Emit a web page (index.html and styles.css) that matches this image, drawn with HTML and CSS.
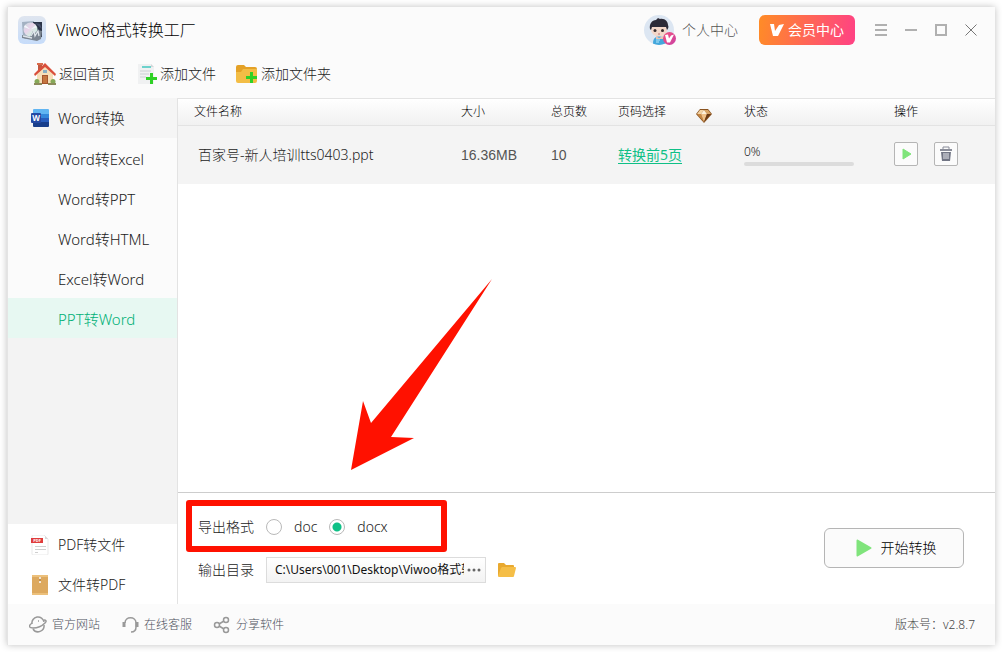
FILE: index.html
```html
<!DOCTYPE html>
<html lang="zh-CN">
<head>
  <meta charset="UTF-8">
  <meta name="viewport" content="width=device-width, initial-scale=1.0">
  <title>Viwoo格式转换工厂</title>
  <link rel="stylesheet" href="styles.css">
</head>
<body>
  <div class="window">
    <header class="title-bar">
      <svg class="logo" viewBox="0 0 28 28">
        <defs>
          <linearGradient id="logo-bg" x1="0" y1="0" x2="0" y2="1">
            <stop offset="0" stop-color="#dfe5ef"/><stop offset="1" stop-color="#c6dcfa"/>
          </linearGradient>
          <linearGradient id="disc" x1="0" y1="0" x2="1" y2="1">
            <stop offset="0" stop-color="#c4dcde"/><stop offset=".4" stop-color="#ead3ea"/><stop offset=".7" stop-color="#d5ede2"/><stop offset="1" stop-color="#b9bcd8"/>
          </linearGradient>
        </defs>
        <rect width="28" height="28" rx="6" fill="url(#logo-bg)"/>
        <path d="M4 6l12-1v16l-9 2-2-2z" fill="#a3b1c2"/>
        <path d="M15 6h9v15l-8 1z" fill="#2b3448"/>
        <path d="M17 7l5 1 2 5z" fill="#47516b"/>
        <circle cx="12.500" cy="13.500" r="7" fill="url(#disc)"/>
        <path d="M12.500 13.500L6 11l1-2zM12.500 13.500l5-4 1 2z" fill="#f3f6fb"/>
        <path d="M4 19l8 2 3-6 2 2 3-3 4 1-1 8-4 2-15-3z" fill="#7b8591"/>
        <path d="M5 20l9 2M13 20l3-5 1 5 3-5 1 5" fill="none" stroke="#dfe5ea" stroke-width="1.300"/>
      </svg>
      <h1>Viwoo格式转换工厂</h1>
      <button class="profile">
        <svg class="avatar" viewBox="0 0 32 30">
          <defs>
            <clipPath id="avatar-clip"><circle cx="15" cy="15" r="15"/></clipPath>
            <linearGradient id="badge" x1="0" y1="0" x2="1" y2="1">
              <stop offset="0" stop-color="#f5547c"/><stop offset="1" stop-color="#c940a5"/>
            </linearGradient>
          </defs>
          <g clip-path="url(#avatar-clip)">
            <rect width="30" height="30" fill="#dce6f2"/>
            <path d="M9 30q-1-8 6-9 8 1 7 9z" fill="#43a7dc"/>
            <path d="M12 21l3 2 4-2v3h-7z" fill="#e8c2b4"/>
            <path d="M12 25h4M12 27h3" stroke="#b8e8fb"/>
          </g>
          <ellipse cx="15" cy="15" rx="8" ry="6.500" fill="#f3d7c9"/>
          <path d="M6 14c-1-5 2-9 6-9l2-2 2 1c5-1 8 3 8 6 1 2 0 4-1 5l-1-3H8l-1 3z" fill="#2c2b38"/>
          <circle cx="11" cy="15.500" r="1.500" fill="#372c2d"/><circle cx="18.500" cy="15.500" r="1.500" fill="#372c2d"/>
          <path d="M14 19h2" stroke="#bc7370"/>
          <circle cx="25.500" cy="23.500" r="6.500" fill="url(#badge)"/>
          <path d="M21 20l3-.5 1 4 2-3 3-1-4 8h-3z" fill="#fff"/>
        </svg>
        个人中心
      </button>
      <button class="vip">
        <svg viewBox="0 0 14 14"><path d="M0 1h4l1 7 4-6 5-1-6 12H3z" fill="#fff"/></svg>
        会员中心
      </button>
      <div class="window-controls">
        <button aria-label="菜单"><svg viewBox="0 0 12 12"><path d="M0 1h12M0 6h12M0 11h12"/></svg></button>
        <button aria-label="最小化"><svg viewBox="0 0 12 12"><path d="M0 6h12"/></svg></button>
        <button aria-label="最大化"><svg viewBox="0 0 12 12"><rect x="1" y="1" width="10" height="10"/></svg></button>
        <button aria-label="关闭"><svg viewBox="0 0 12 12"><path d="M.5.5l11 11M11.500.5l-11 11" class="cross"/></svg></button>
      </div>
    </header>

    <nav class="toolbar">
      <button>
        <svg viewBox="0 0 22 22">
          <path d="M4 1h4v8H4z" fill="#c0573f"/><path d="M3 0h6v2H3z" fill="#d96b4c"/>
          <path d="M3 11l8-8 8 8v10H3z" fill="#f6deb8"/>
          <path d="M0 11L11 0l11 11-1 2-10-9-10 9z" fill="#d94f3b"/>
          <path d="M8 12h6v9H8z" fill="#a5562e"/><path d="M9 13h4v7H9z" fill="#c5753f"/>
          <rect x="9" y="7" width="4" height="3" fill="#8aaec2"/>
          <g fill="#86a959"><circle cx="3" cy="18.500" r="2.500"/><circle cx="19" cy="18.500" r="2.500"/></g>
          <path d="M0 20h8v2H0zm14 0h8v2h-8z" fill="#8c8c5c"/>
        </svg>
        返回首页
      </button>
      <button>
        <svg viewBox="0 0 22 22">
          <path d="M3 1h13l3 3v17H3z" fill="#f0f1f2"/><path d="M16 1v3h3z" fill="#d4d7d9"/>
          <path d="M7 4h9" stroke="#42c7bf" stroke-width="1.500"/>
          <path d="M5 8h11M5 11h9M5 14h6" stroke="#cbd0d4"/>
          <path d="M15 10h3v4h4v3h-4v4h-3v-4h-4v-3h4z" fill="#2fd126"/>
        </svg>
        添加文件
      </button>
      <button>
        <svg viewBox="0 0 22 22">
          <path d="M0 4q0-2 2-2h6l2 2h9q2 0 2 2v12H0z" fill="#e4a126"/>
          <path d="M7 6h14v12q0 2-2 2H2q-2 0-2-2V9h5z" fill="#f3bd45"/>
          <path d="M14 9h3v4h4v3h-4v4h-3v-4h-4v-3h4z" fill="#2fd126"/>
        </svg>
        添加文件夹
      </button>
    </nav>

    <div class="content">
      <aside class="sidebar">
        <a href="#" class="group open">
          <svg viewBox="0 0 18 18">
            <path d="M2 1q0-1 1-1h14q1 0 1 1v4H2z" fill="#61b5f2"/><path d="M2 5h16v4H2z" fill="#3487db"/>
            <path d="M2 9h16v4H2z" fill="#285dbd"/><path d="M2 13h16v4q0 1-1 1H3q-1 0-1-1z" fill="#183e8b"/>
            <rect y="4" width="10" height="10" rx="1" fill="#2449a3"/>
            <text x="5" y="12" text-anchor="middle" class="word-mark">W</text>
          </svg>
          Word转换
        </a>
        <a href="#" class="item">Word转Excel</a>
        <a href="#" class="item">Word转PPT</a>
        <a href="#" class="item">Word转HTML</a>
        <a href="#" class="item">Excel转Word</a>
        <a href="#" class="item active">PPT转Word</a>
        <div class="sidebar-fill"></div>
        <a href="#" class="group">
          <svg viewBox="0 0 18 20">
            <path d="M2 0h11l4 4v15q0 1-1 1H2q-1 0-1-1V1q0-1 1-1z" fill="#fff" stroke="#e9e9e9"/>
            <path d="M14 1l3 3h-3z" fill="#d8d8d8"/>
            <rect y="3" width="12" height="5" fill="#df3c3c"/>
            <text x="6" y="7" text-anchor="middle" class="pdf-mark">PDF</text>
            <path d="M4 11.500h11M4 14.500h11M4 17.500h3" stroke="#cfcfcf"/>
          </svg>
          PDF转文件
        </a>
        <a href="#" class="group">
          <svg viewBox="0 0 18 20">
            <rect x="1" width="16" height="20" rx="1" fill="#dda95f"/><path d="M1 0h16v2H1zm0 18h16v2H1z" fill="#ecc07b"/>
            <path d="M9 2v5" stroke="#a7783b"/><circle cx="9" cy="3" r="1" fill="#fff"/><circle cx="9" cy="7" r="1" fill="#fff"/>
          </svg>
          文件转PDF
        </a>
      </aside>

      <main class="main">
        <table class="files">
          <colgroup>
            <col><col class="col-size"><col class="col-pages"><col class="col-range"><col class="col-status"><col class="col-actions">
          </colgroup>
          <thead>
            <tr>
              <th>文件名称</th>
              <th>大小</th>
              <th>总页数</th>
              <th>
                <span class="range-head">页码选择
                  <svg viewBox="0 0 16 14">
                    <path d="M4 0h8l4 5-8 9-8-9z" fill="#8a5420"/>
                    <path d="M4 1h4L5 5H1z" fill="#f3d3a4"/><path d="M8 1h4l3 4h-4z" fill="#d9a465"/>
                    <path d="M8 1l3 4H5z" fill="#fff1da"/><path d="M1 5h4l3 8z" fill="#c68743"/>
                    <path d="M5 5h6l-3 8z" fill="#f0c188"/><path d="M11 5h4l-7 8z" fill="#6c3b15"/>
                  </svg>
                </span>
              </th>
              <th>状态</th>
              <th>操作</th>
            </tr>
          </thead>
          <tbody>
            <tr>
              <td class="name">百家号-新人培训tts0403.ppt</td>
              <td class="number">16.36MB</td>
              <td class="number">10</td>
              <td><a href="#" class="range-link">转换前5页</a></td>
              <td>
                <div class="status">
                  <span id="progress-text">0%</span>
                  <div class="progress" role="progressbar" aria-labelledby="progress-text" aria-valuenow="0"></div>
                </div>
              </td>
              <td>
                <div class="actions">
                  <button aria-label="开始"><svg viewBox="0 0 16 16"><path d="M5 3l8 5-8 5z" fill="#7fe47a" stroke="#7fe47a" stroke-linejoin="round"/></svg></button>
                  <button aria-label="删除"><svg viewBox="0 0 16 16">
                    <path d="M5 3V1h6v2" fill="none" stroke="#888b98"/>
                    <path d="M2 3h12v2H2z" fill="#8a8d99"/><path d="M3 6h10l-1 9H4z" fill="#717584"/>
                    <path d="M6 7v6M8 7v6M10 7v6" stroke="#e8e9ed"/>
                  </svg></button>
                </div>
              </td>
            </tr>
          </tbody>
        </table>

        <div class="file-space">
          <svg class="arrow" viewBox="0 0 141 192"><path d="M141 0L40 158l23 1L0 191l12-69 8 22z" fill="#ff1100"/></svg>
        </div>

        <section class="export">
          <div class="export-options">
            <div class="format" role="radiogroup" aria-labelledby="format-label">
              <span id="format-label">导出格式</span>
              <label><input type="radio" name="format" value="doc">doc</label>
              <label><input type="radio" name="format" value="docx" checked>docx</label>
            </div>
            <div class="output">
              <label for="path">输出目录</label>
              <div class="path-box">
                <input type="text" id="path" value="C:\Users\001\Desktop\Viwoo格式转换工厂">
                <button aria-label="选择目录"><svg viewBox="0 0 14 4"><circle cx="2" cy="2" r="1.500"/><circle cx="7" cy="2" r="1.500"/><circle cx="12" cy="2" r="1.500"/></svg></button>
              </div>
              <button class="open-folder" aria-label="打开目录">
                <svg viewBox="0 0 18 16">
                  <path d="M0 2q0-1 1-1h5l2 2h7q1 0 1 1v10H0z" fill="#e9a92f"/>
                  <path d="M4 5h13q1 0 1 1l-2 8q0 1-1 1H1q-1 0-1-1L3 6z" fill="#f5be47"/>
                </svg>
              </button>
            </div>
          </div>
          <button class="start">
            <svg viewBox="0 0 16 18"><path d="M1.500 1.500L14.500 9l-13 7.500z" fill="#80e47c" stroke="#80e47c" stroke-width="2" stroke-linejoin="round"/></svg>
            开始转换
          </button>
        </section>
      </main>
    </div>

    <footer class="footer">
      <a href="#">
        <svg viewBox="0 0 18 18">
          <path d="M3 8a6 6 0 0 1 12-2M15 9a6 6 0 0 1-11 4"/>
          <path d="M3 7C-1 10 0 12 4 12c5 0 9-2 12-5 2-2 1-3-1-3M9 5h1"/>
        </svg>
        官方网站
      </a>
      <a href="#">
        <svg viewBox="0 0 18 18">
          <path d="M4 7c0-7 11-7 11 0v4c0 3-2 5-5 5"/>
          <path d="M3 6v5M16 6v5" stroke-width="3"/>
        </svg>
        在线客服
      </a>
      <a href="#">
        <svg viewBox="0 0 18 18">
          <circle cx="4" cy="9" r="2.500"/><circle cx="13" cy="4" r="2.500"/><circle cx="13" cy="14" r="2.500"/>
          <path d="M6 8l5-3M6 10l5 3"/>
        </svg>
        分享软件
      </a>
      <span class="version">版本号：v2.8.7</span>
    </footer>
  </div>
</body>
</html>
```
FILE: styles.css
```css
* {
  box-sizing: border-box;
}
body {
  display: flex;
  min-height: 100vh;
  margin: 0;
  padding: 7px;
  background: #fff;
  color: #222;
  font-family: "Noto Sans", "Noto Sans CJK SC", sans-serif;
  font-size: 14px;
  font-weight: 300;
  line-height: 20px;
}
button {
  display: flex;
  align-items: center;
  padding: 0;
  border: none;
  background: none;
  color: inherit;
  font: inherit;
  white-space: nowrap;
  cursor: pointer;
}
a {
  color: inherit;
  text-decoration: none;
}
svg {
  display: block;
  flex: none;
}
.window {
  display: flex;
  flex: 1;
  flex-direction: column;
  min-width: 0;
  border-left: 1px solid #e4e4e4;
  background: #fbfbfb;
  box-shadow: 0 0 7px rgba(0, 0, 0, 0.25);
}

/* Title bar */
.title-bar {
  display: flex;
  align-items: center;
  height: 46px;
  padding: 0 9px 0 10px;
}
.logo {
  width: 28px;
  height: 28px;
}
h1 {
  flex: 1;
  margin: 0 0 0 10px;
  color: #000;
  font-size: 16px;
  font-weight: 300;
  line-height: 22px;
}
.profile {
  gap: 6px;
  color: #555;
}
.avatar {
  width: 32px;
  height: 30px;
}
.vip {
  justify-content: center;
  gap: 4px;
  width: 96px;
  height: 30px;
  margin: 0 11px 0 21px;
  border-radius: 6px;
  background: linear-gradient(100deg, #ff8c26, #ff4185);
  color: #fff;
  font-weight: 400;
}
.vip svg {
  width: 14px;
  height: 14px;
}
.window-controls {
  display: flex;
}
.window-controls button {
  justify-content: center;
  width: 30px;
  height: 30px;
}
.window-controls svg {
  width: 12px;
  height: 12px;
  overflow: visible;
  fill: none;
  stroke: #b0b0b0;
  stroke-width: 2;
}
.window-controls .cross {
  stroke: #777;
  stroke-width: 1;
}

/* Toolbar */
.toolbar {
  display: flex;
  gap: 20px;
  height: 45px;
  padding: 0 26px;
}
.toolbar button {
  gap: 3px;
  height: 42px;
}
.toolbar svg {
  width: 22px;
  height: 22px;
}

/* Sidebar */
.content {
  display: flex;
  flex: 1;
}
.sidebar {
  display: flex;
  flex-direction: column;
  width: 170px;
  border-right: 1px solid #e3e3e3;
}
.sidebar a {
  display: flex;
  align-items: center;
  height: 40px;
  padding-top: 2px;
  padding-left: 50px;
}
.sidebar .item {
  font-size: 15px;
}
.sidebar .group {
  gap: 9px;
  padding-left: 23px;
  background: #fff;
}
.sidebar .open {
  padding-top: 0;
  background: #f5f5f5;
  font-size: 15px;
}
.group svg {
  width: 18px;
  height: 20px;
}
.word-mark {
  fill: #fff;
  font: bold 8px "Open Sans", sans-serif;
}
.pdf-mark {
  fill: #fff;
  font: bold 4px "Open Sans", sans-serif;
}
.sidebar .active {
  background: #e7f8f2;
  color: #00b077;
}
.sidebar-fill {
  flex: 1;
  background: #f3f3f3;
}

/* File list */
.main {
  display: flex;
  flex: 1;
  flex-direction: column;
  min-width: 0;
  border-top: 1px solid #e3e3e3;
  background: #fff;
}
.files {
  width: 100%;
  border-collapse: collapse;
  table-layout: fixed;
}
.col-size {
  width: 90px;
}
.col-pages {
  width: 67px;
}
.col-range {
  width: 126px;
}
.col-status {
  width: 150px;
}
.col-actions {
  width: 117px;
}
.files th,
.files td {
  padding: 0 0 0 16px;
  text-align: left;
  white-space: nowrap;
}
.files th {
  height: 26px;
  border-bottom: 1px solid #e3e3e3;
  background: linear-gradient(#fff, #f1f1f1);
  color: #000;
  font-size: 12px;
  font-weight: 300;
}
.range-head {
  display: flex;
  align-items: center;
  gap: 30px;
}
.range-head svg {
  width: 16px;
  height: 14px;
  margin-top: 8px;
}
.files td {
  height: 59px;
  background: #f4f4f4;
}
.files .name {
  padding-left: 20px;
}
.files .number {
  color: #555;
  font-family: "Liberation Sans", Arial, sans-serif;
}
.range-link {
  color: #0fc086;
  font-weight: 400;
  text-decoration: underline;
  text-underline-offset: 3px;
}
.status {
  padding-bottom: 2px;
  font-size: 12px;
}
.progress {
  width: 110px;
  height: 4px;
  border-radius: 2px;
  background: #dcdcdc;
}
.actions {
  display: flex;
  gap: 16px;
  padding-bottom: 2px;
}
.actions button {
  justify-content: center;
  width: 24px;
  height: 24px;
  border: 1px solid #b5b5b5;
  border-radius: 2px;
  background: #fbfbfb;
}
.actions svg {
  width: 16px;
  height: 16px;
}
.file-space {
  position: relative;
  flex: 1;
}
.arrow {
  position: absolute;
  bottom: 21px;
  left: 173px;
  width: 141px;
  height: 192px;
}

/* Export options */
.export {
  display: flex;
  align-items: center;
  justify-content: space-between;
  height: 112px;
  padding: 0 31px 2px 8px;
  border-top: 1px solid #cdcdcd;
}
.export-options {
  display: flex;
  flex-direction: column;
  gap: 5px;
  padding-bottom: 12px;
}
.format {
  display: flex;
  align-items: center;
  gap: 12px;
  width: 261px;
  height: 52px;
  padding-top: 2px;
  padding-left: 6px;
  border: 6px solid #ff1100;
  border-radius: 3px;
}
.format label {
  display: flex;
  align-items: center;
  gap: 12px;
}
.format input {
  width: 16px;
  height: 16px;
  margin: 0;
  border: 1px solid #b9b9b9;
  border-radius: 50%;
  background: #fff;
  appearance: none;
}
.format input:checked {
  background: radial-gradient(circle, #0fc086 4px, #fff 5px);
}
.output {
  display: flex;
  align-items: center;
  gap: 12px;
  padding-left: 12px;
}
.path-box {
  display: flex;
  align-items: center;
  width: 220px;
  height: 26px;
  padding: 0 4px 0 8px;
  border: 1px solid #dcdcdc;
  background: linear-gradient(#fff, #f3f3f3);
}
.path-box input {
  flex: 1;
  min-width: 0;
  padding: 0;
  border: none;
  background: none;
  color: #111;
  font: inherit;
  font-size: 12px;
  font-weight: 400;
}
.path-box button {
  margin-left: 3px;
}
.path-box svg {
  width: 14px;
  height: 4px;
  fill: #666;
}
.open-folder svg {
  width: 18px;
  height: 16px;
}
.start {
  justify-content: center;
  gap: 9px;
  width: 140px;
  height: 40px;
  padding-left: 4px;
  border: 1px solid #b5b5b5;
  border-radius: 6px;
  background: #fbfbfb;
  color: #000;
}
.start svg {
  width: 16px;
  height: 18px;
}

/* Footer */
.footer {
  display: flex;
  align-items: center;
  gap: 21px;
  height: 41px;
  padding: 0 20px 0 21px;
  color: #4c505c;
  font-size: 12px;
}
.footer a {
  display: flex;
  align-items: center;
  gap: 5px;
}
.footer svg {
  width: 18px;
  height: 18px;
  fill: none;
  stroke: #999;
  stroke-width: 1.5;
}
.version {
  margin-left: auto;
  color: #444;
}
```
